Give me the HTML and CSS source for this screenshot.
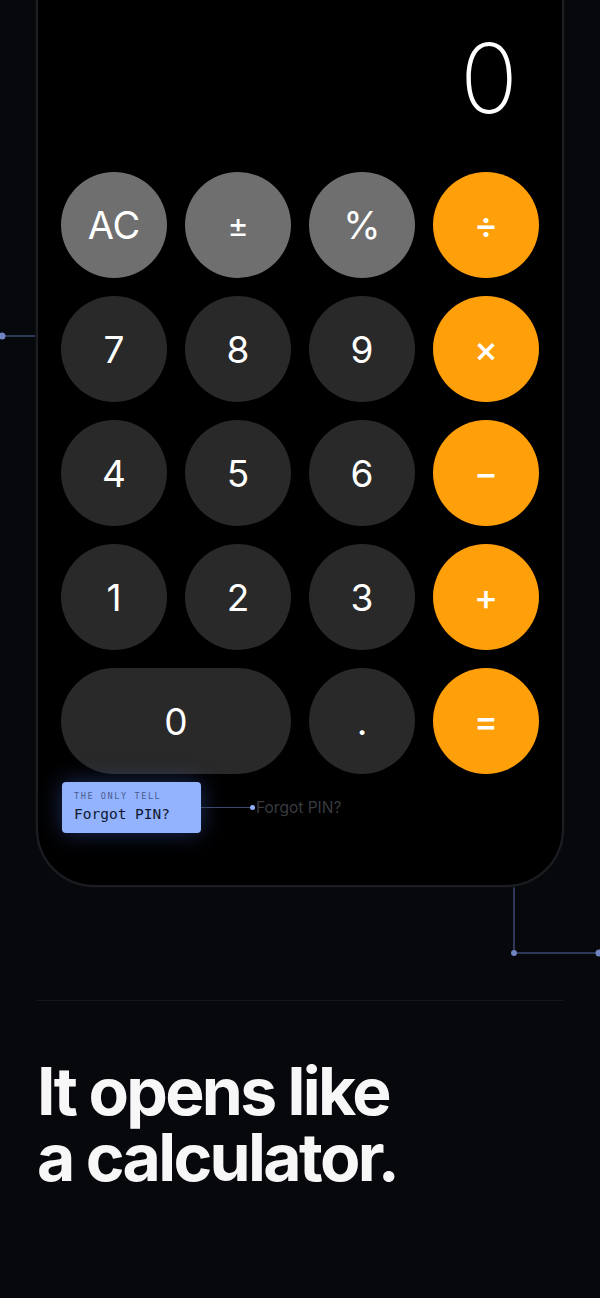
FILE: index.html
```html
<!DOCTYPE html>
<html lang="en">
<head>
  <meta charset="UTF-8">
  <title>It opens like a calculator</title>
  <meta name="viewport" content="width=device-width, initial-scale=1">
  <link rel="stylesheet" href="styles.css">
</head>
<body>
  <div class="page">
    <!-- connector wires behind the phone -->
    <svg class="wires" width="600" height="1000" viewBox="0 0 600 1000">
      <line x1="2" y1="336" x2="37" y2="336" class="wire"/>
      <circle cx="2" cy="336" r="3.5" class="node"/>
      <line x1="514" y1="870" x2="514" y2="953" class="wire"/>
      <line x1="514" y1="953" x2="600" y2="953" class="wire"/>
      <circle cx="514" cy="953" r="3" class="node"/>
      <circle cx="599" cy="953" r="3.5" class="node"/>
    </svg>

    <div class="phone">
      <div class="display">0</div>
      <div class="keypad">
        <button class="key fn">AC</button>
        <button class="key fn sym">±</button>
        <button class="key fn">%</button>
        <button class="key op">÷</button>

        <button class="key num">7</button>
        <button class="key num">8</button>
        <button class="key num">9</button>
        <button class="key op">×</button>

        <button class="key num">4</button>
        <button class="key num">5</button>
        <button class="key num">6</button>
        <button class="key op">−</button>

        <button class="key num">1</button>
        <button class="key num">2</button>
        <button class="key num">3</button>
        <button class="key op">+</button>

        <button class="key num wide">0</button>
        <button class="key num">.</button>
        <button class="key op">=</button>
      </div>

      <div class="tell">
        <div class="tell-card">
          <span class="tell-label">THE ONLY TELL</span>
          <span class="tell-text">Forgot PIN?</span>
        </div>
        <span class="tell-line"></span>
        <span class="tell-dot"></span>
        <span class="tell-link">Forgot PIN?</span>
      </div>
    </div>

    <hr class="rule">

    <h1 class="headline">
      <span class="line">It opens like</span>
      <span class="line">a calculator.</span>
    </h1>
  </div>
</body>
</html>
```

FILE: styles.css
```css
body { margin: 0; background: #07080b; font-family: Inter, "Liberation Sans", sans-serif; color: #fff; overflow: hidden; }
.page { position: relative; display: flow-root; width: 600px; height: 1298px; }

.wires { position: absolute; top: 0; left: 0; pointer-events: none; }
.wire { stroke: #3a4870; stroke-width: 1.5; }
.node { fill: #6f84c0; }

.phone { position: relative; margin: -40px 36px 0; padding: 70px 22px 52px 23px; background: #000; border: 2px solid #1c1e23; border-top: none; border-radius: 0 0 58px 58px; box-shadow: 0 0 0 1px #0d0e12; }

.display { font-size: 96px; font-weight: 200; line-height: 96px; text-align: right; padding-right: 22px; margin-bottom: 46px; }

.keypad { display: grid; grid-template-columns: repeat(4, 106px); grid-auto-rows: 106px; gap: 18px; }
.key { border: none; padding: 0; border-radius: 53px; color: #fff; font-family: Inter, "Liberation Sans", sans-serif; font-size: 37px; font-weight: 400; display: flex; align-items: center; justify-content: center; cursor: pointer; }
.key.fn { background: #6f6f6f; font-size: 38px; }
.key.fn.sym { font-size: 32px; }
.key.num { background: #292929; }
.key.op { background: #ff9f0a; font-size: 36px; font-weight: 500; }
.key.wide { grid-column: span 2; }

.tell { display: flex; align-items: center; margin-top: 8px; padding-left: 1px; }
.tell-card { width: 139px; height: 51px; box-sizing: border-box; padding: 9px 12px 0; background: #93b3ff; border-radius: 4px; box-shadow: 0 0 22px rgba(90, 130, 255, 0.35); display: flex; flex-direction: column; gap: 5px; font-family: "DejaVu Sans Mono", "Liberation Mono", monospace; }
.tell-label { font-size: 8.5px; letter-spacing: 1.6px; color: #4a5c8c; }
.tell-text { font-size: 14.5px; color: #0e1830; }
.tell-line { width: 49px; height: 1px; background: #3d4a70; }
.tell-dot { width: 5px; height: 5px; border-radius: 50%; background: #8fb0ff; }
.tell-link { font-size: 15.5px; color: #3a3b40; margin-left: 1px; }

.rule { margin: 113px 36px 0; border: none; border-top: 1px solid #15171c; }

.headline { margin: 57px 0 0 37px; font-size: 66px; line-height: 66px; font-weight: 700; letter-spacing: -0.04em; color: #f7f7f8; }
.headline .line { display: block; height: 66px; }
```
